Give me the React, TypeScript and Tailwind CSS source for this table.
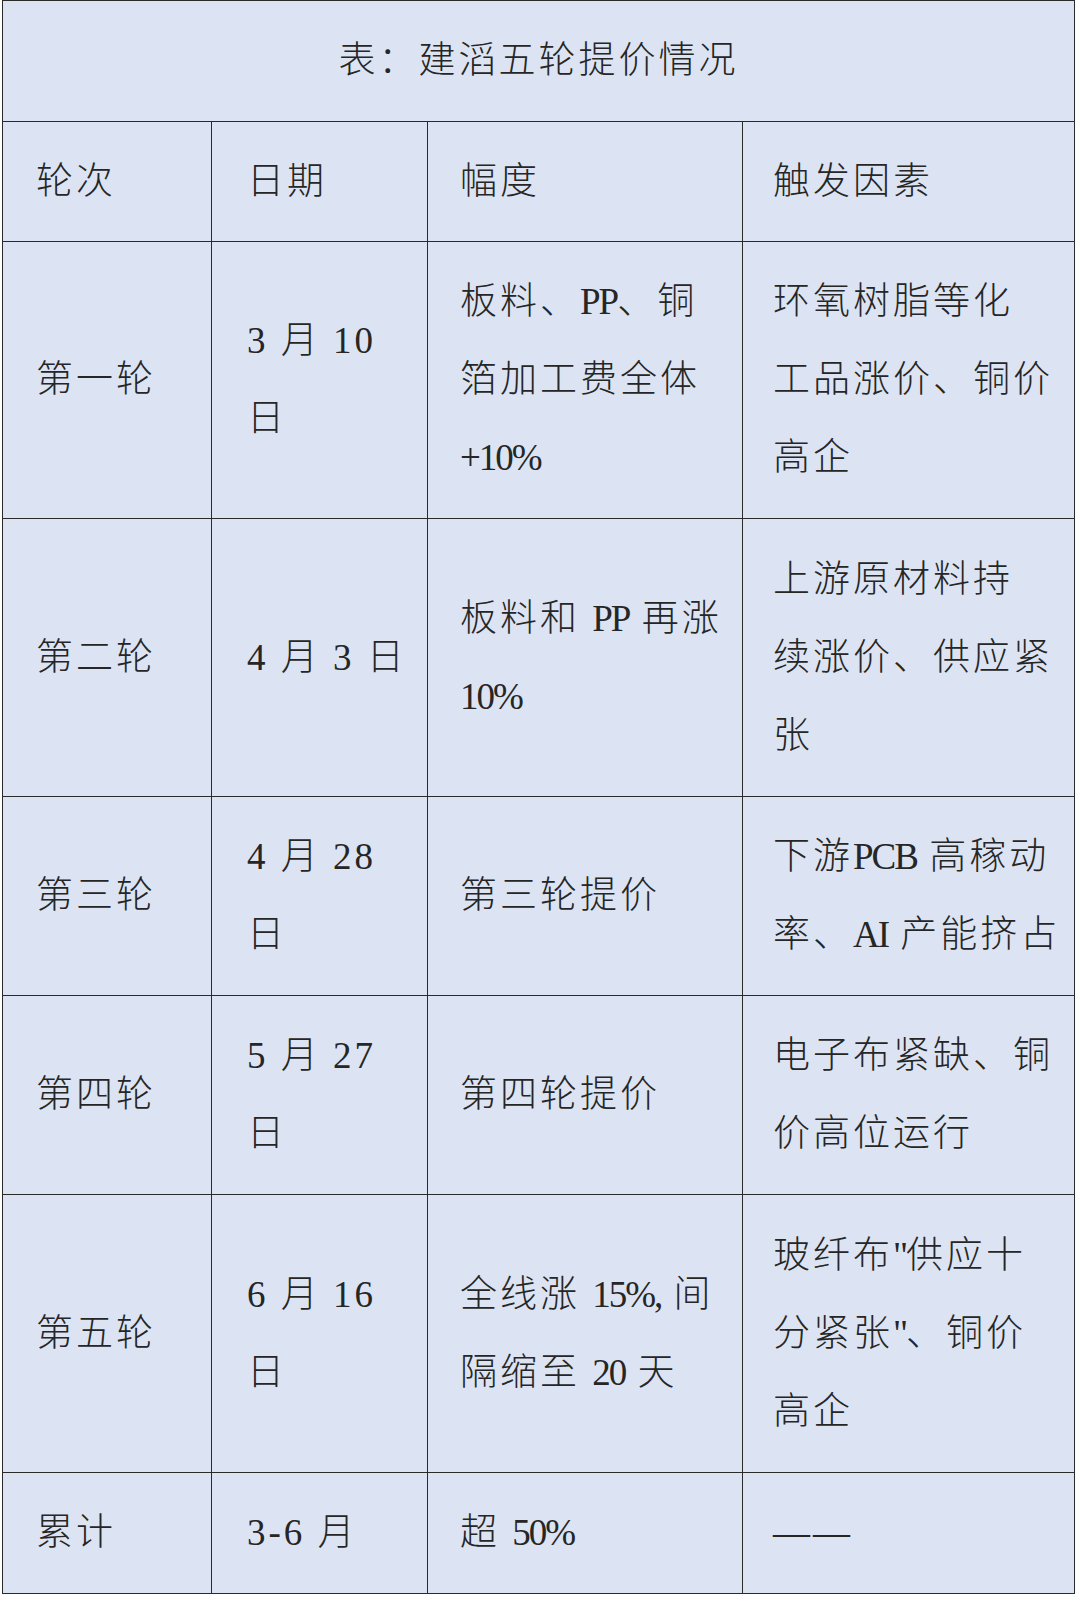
import React from "react";

type Cell = string[];

type Row = {
    h: string;
    cells: Cell[];
};

// every line is given as its own string so the breaks match the printed table
const rows: Row[] = [
    {h: "h-[120px]", cells: [["轮次"], ["日期"], ["幅度"], ["触发因素"]]},
    {
        h: "h-[277px]",
        cells: [
            ["第一轮"],
            ["3 月 10", "日"],
            ["板料、PP、铜", "箔加工费全体", "+10%"],
            ["环氧树脂等化", "工品涨价、铜价", "高企"],
        ],
    },
    {
        h: "h-[278px]",
        cells: [
            ["第二轮"],
            ["4 月 3 日"],
            ["板料和 PP 再涨", "10%"],
            ["上游原材料持", "续涨价、供应紧", "张"],
        ],
    },
    {
        h: "h-[199px]",
        cells: [["第三轮"], ["4 月 28", "日"], ["第三轮提价"], ["下游PCB 高稼动", "率、AI 产能挤占"]],
    },
    {
        h: "h-[199px]",
        cells: [["第四轮"], ["5 月 27", "日"], ["第四轮提价"], ["电子布紧缺、铜", "价高位运行"]],
    },
    {
        h: "h-[278px]",
        cells: [
            ["第五轮"],
            ["6 月 16", "日"],
            ["全线涨 15%, 间", "隔缩至 20 天"],
            ["玻纤布\"供应十", "分紧张\"、铜价", "高企"],
        ],
    },
    {h: "h-[121px]", cells: [["累计"], ["3-6 月"], ["超 50%"], ["——"]]},
];

const colPad = ["pl-[33px]", "pl-[35px]", "pl-[32px]", "pl-[30px]"];

// in the last two columns the latin runs are set tighter than the chinese text
const renderLine = (line: string, narrowLatin: boolean) => {
    if (!narrowLatin) return line;
    return line.split(/([A-Za-z0-9%+,.\-"]+)/).map((part, i) =>
        /^[A-Za-z0-9%+,.\-"]+$/.test(part) ? (
            <span key={i} className="tracking-[-2px]">
                {part}
            </span>
        ) : (
            <span key={i}>{part}</span>
        )
    );
};

const App: React.FC = () => {
    return (
        <div className="w-[1080px] h-[1601px] bg-white">
            <div
                className="ml-[2px] w-[1073px] border-l border-t border-[#2a2a2a] bg-[#dce4f3] text-[#262626] text-[37px] font-light leading-[78px] tracking-[3px]"
                style={{fontFamily: '"Liberation Serif", "Noto Sans CJK SC", serif'}}
            >
                {/*TITLE*/}
                <div className="h-[121px] flex items-center justify-center border-r border-b border-[#2a2a2a] whitespace-nowrap">
                    表：建滔五轮提价情况
                </div>

                {/*TABLE BODY*/}
                {rows.map((row, i) => (
                    <div key={i} className={"grid grid-cols-[209px_216px_315px_332px] " + row.h}>
                        {row.cells.map((lines, j) => (
                            <div
                                key={j}
                                className={"flex flex-col justify-center border-r border-b border-[#2a2a2a] " + colPad[j]}
                            >
                                {lines.map((line, k) => (
                                    <div key={k} className="whitespace-nowrap">
                                        {renderLine(line, j >= 2)}
                                    </div>
                                ))}
                            </div>
                        ))}
                    </div>
                ))}
            </div>
        </div>
    );
};

export default App;
